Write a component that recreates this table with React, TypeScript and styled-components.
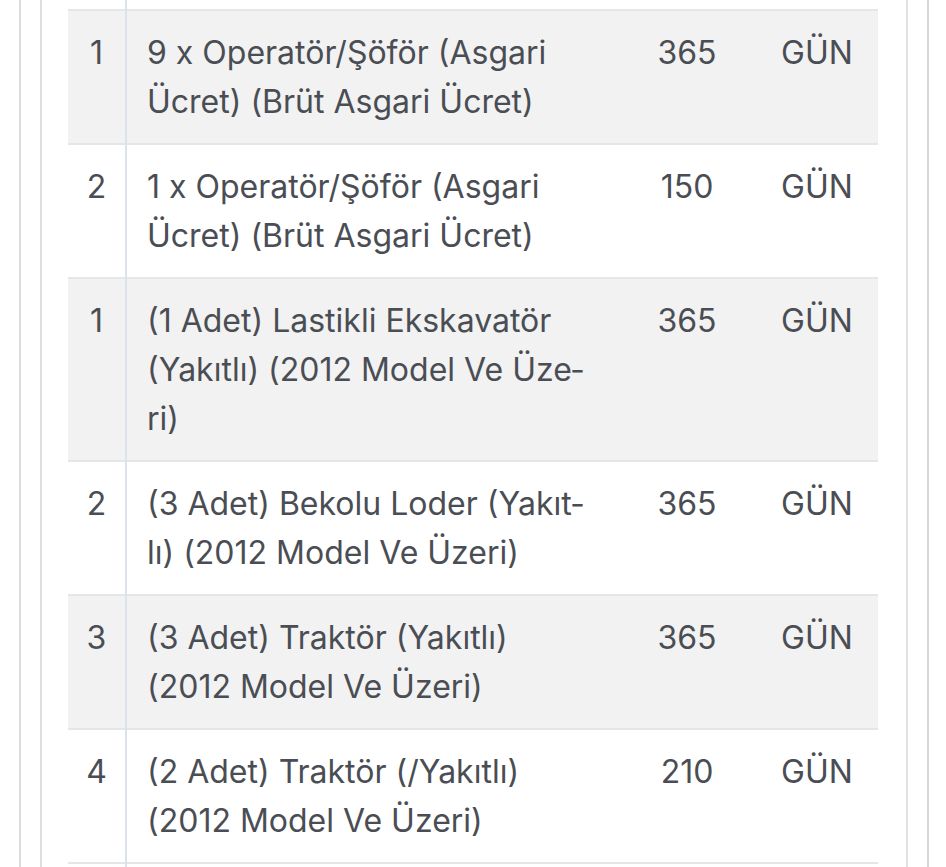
import React from "react";
import styled, { createGlobalStyle } from "styled-components";

const GlobalStyle = createGlobalStyle`
  body {
    margin: 0;
    background: #fff;
    font-family: Inter, "Noto Sans", "Liberation Sans", sans-serif;
  }
`;

type Row = { no: string; name: string; qty: string; unit: string };

const rows: Row[] = [
  { no: "1", name: "9 x Operatör/Şöför (Asgari Ücret) (Brüt Asgari Ücret)", qty: "365", unit: "GÜN" },
  { no: "2", name: "1 x Operatör/Şöför (Asgari Ücret) (Brüt Asgari Ücret)", qty: "150", unit: "GÜN" },
  { no: "1", name: "(1 Adet) Lastikli Ekskavatör (Yakıtlı) (2012 Model Ve Üze\u00ADri)", qty: "365", unit: "GÜN" },
  { no: "2", name: "(3 Adet) Bekolu Loder (Yakıt\u00ADlı) (2012 Model Ve Üzeri)", qty: "365", unit: "GÜN" },
  { no: "3", name: "(3 Adet) Traktör (Yakıtlı) (2012 Model Ve Üzeri)", qty: "365", unit: "GÜN" },
  { no: "4", name: "(2 Adet) Traktör (/Yakıtlı) (2012 Model Ve Üzeri)", qty: "210", unit: "GÜN" },
];

const App = () => {
  return (
    <>
      <GlobalStyle />
      <Outer>
        <Inner>
          <Table>
            <colgroup>
              <col style={{ width: 58 }} />
              <col style={{ width: 488 }} />
              <col style={{ width: 142 }} />
              <col style={{ width: 122 }} />
            </colgroup>
            <tbody>
              <Spacer>
                <NoCell />
                <td />
                <td />
                <td />
              </Spacer>
              {rows.map((r, i) => (
                <Tr key={i} striped={i % 2 === 0}>
                  <NoCell>{r.no}</NoCell>
                  <NameCell>{r.name}</NameCell>
                  <QtyCell>{r.qty}</QtyCell>
                  <UnitCell>{r.unit}</UnitCell>
                </Tr>
              ))}
              <Spacer bordered>
                <NoCell />
                <td />
                <td />
                <td />
              </Spacer>
            </tbody>
          </Table>
        </Inner>
      </Outer>
    </>
  );
};
export default App;

const Outer = styled.div`
  margin-left: 19px;
  width: 910px;
  box-sizing: border-box;
  border-left: 2px solid #dcdcdf;
  border-right: 2px solid #d6d6d8;
  min-height: 867px;
`;

const Inner = styled.div`
  margin: 0 19px;
  box-sizing: border-box;
  border-left: 2px solid #dfdfe2;
  border-right: 2px solid #e2e2e4;
  padding: 0 28px 0 26px;
  min-height: 867px;
`;

const Table = styled.table`
  width: 810px;
  table-layout: fixed;
  border-collapse: collapse;
  color: #4a4e54;
  font-size: 32px;
  line-height: 49px;
`;

const Spacer = styled.tr<{ bordered?: boolean }>`
  height: 9px;
  border-top: ${({ bordered }) => (bordered ? "2px solid #e4e6e9" : "none")};
  td {
    padding: 0;
    height: 9px;
  }
`;

const Tr = styled.tr<{ striped?: boolean }>`
  background: ${({ striped }) => (striped ? "#f2f2f2" : "#fff")};
  border-top: 2px solid #e4e6e9;
  td {
    padding: 17px 0;
    vertical-align: top;
  }
`;

const NoCell = styled.td`
  text-align: center;
  border-right: 2px solid #dde2ea;
`;

const NameCell = styled.td`
  && {
    padding-left: 20px;
    padding-right: 20px;
  }
  hyphens: manual;
`;

const QtyCell = styled.td`
  text-align: center;
  && {
    padding-left: 4px;
  }
`;

const UnitCell = styled.td`
  text-align: center;
`;
